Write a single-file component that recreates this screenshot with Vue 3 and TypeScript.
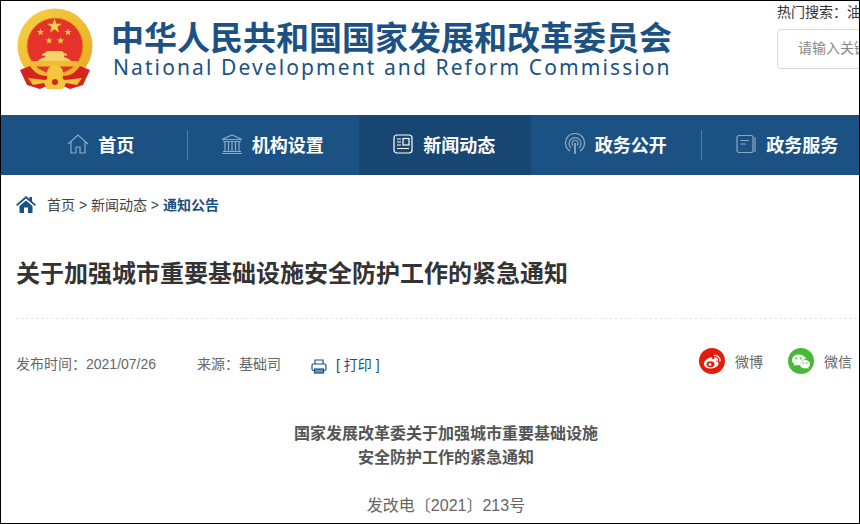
<script setup lang="ts">
interface NavItem { label: string; icon: string; active?: boolean }
const nav: NavItem[] = [
  { label: '首页', icon: 'home' },
  { label: '机构设置', icon: 'bank' },
  { label: '新闻动态', icon: 'news', active: true },
  { label: '政务公开', icon: 'signal' },
  { label: '政务服务', icon: 'book' },
]
</script>

<template>
  <div class="frame">
    <header class="top">
      <div class="brand">
        <svg class="emblem" viewBox="0 0 76 82" width="76" height="82">
          <defs>
            <linearGradient id="gold" x1="0" y1="0" x2="1" y2="1">
              <stop offset="0" stop-color="#f7d048" />
              <stop offset="1" stop-color="#e8a91e" />
            </linearGradient>
          </defs>
          <circle cx="38" cy="38" r="37.500" fill="url(#gold)" />
          <circle cx="38" cy="38" r="28" fill="#e5322a" stroke="#d9971c" stroke-width="1" />
          <polygon points="37.500,10.500 39.300,15.700 44.800,15.800 40.400,19.100 42,24.400 37.500,21.200 33,24.400 34.600,19.100 30.200,15.800 35.700,15.700" fill="#f8d24a" />
          <polygon points="23.500,20.500 24.400,23 27,23.100 24.900,24.700 25.600,27.200 23.500,25.800 21.400,27.200 22.100,24.700 20,23.100 22.600,23" fill="#f8d24a" />
          <polygon points="51,20.500 51.900,23 54.500,23.100 52.400,24.700 53.100,27.200 51,25.800 48.900,27.200 49.600,24.700 47.500,23.100 50.100,23" fill="#f8d24a" />
          <polygon points="32,29 32.900,31.500 35.500,31.600 33.400,33.200 34.100,35.700 32,34.300 29.900,35.700 30.600,33.200 28.500,31.600 31.100,31.500" fill="#f8d24a" />
          <polygon points="43.500,29 44.400,31.500 47,31.600 44.900,33.200 45.600,35.700 43.500,34.300 41.400,35.700 42.100,33.200 40,31.600 42.600,31.500" fill="#f8d24a" />
          <path d="M30 43 L45 43 L47 45 L50 46 L50 47.500 L47 47.500 L47 49 L52 51 L54 53 L21 53 L23 51 L28 49 L28 47.500 L25 47.500 L25 46 L28 45 Z" fill="#f6d26a" />
          <path d="M15 53 L60 53 L62 58.500 L13 58.500 Z" fill="#f0bd32" />
          <path d="M13 58 L3 62 L10 77 L23 81 L30 78 L30 68 C22 68 17 64 13 58 Z" fill="#d5231d" />
          <path d="M63 58 L73 62 L66 77 L53 81 L46 78 L46 68 C54 68 59 64 63 58 Z" fill="#d5231d" />
          <circle cx="38" cy="65" r="8" fill="#f4c63c" />
          <path d="M11 70 L28 72 L33 70 L43 70 L48 72 L65 70 L60 77 L49 75 L46 81 L30 81 L27 75 L16 77 Z" fill="#f4c63c" />
          <circle cx="38" cy="74" r="3" fill="#d5231d" />
        </svg>
        <div class="names">
          <div class="cn">中华人民共和国国家发展和改革委员会</div>
          <div class="en">National Development and Reform Commission</div>
        </div>
      </div>
      <div class="search">
        <div class="hot">热门搜索：油价</div>
        <div class="box">请输入关键字</div>
      </div>
    </header>

    <nav class="nav">
      <a v-for="item in nav" :key="item.label" class="nav-item" :class="{ active: item.active }">
        <svg class="nav-icon" viewBox="0 0 22 22" width="22" height="22" fill="none" stroke="currentColor" stroke-width="1.2">
          <template v-if="item.icon === 'home'">
            <path d="M1 11 L11 2 L21 11" />
            <path d="M4 9 V20 H9 V14 H13 V20 H18 V9" />
          </template>
          <template v-else-if="item.icon === 'bank'">
            <path d="M1 6.500 L11 2 L21 6.500 Z" />
            <path d="M2 8.500 H20 M1 20.500 H21 M2 18.500 H20 M4 9 V18 M7.500 9 V18 M11 9 V18 M14.500 9 V18 M18 9 V18" />
          </template>
          <template v-else-if="item.icon === 'news'">
            <rect x="2" y="2" width="18" height="18" rx="3" />
            <path d="M5 6 H9 M5 9 H9 M5 12 H9 M5 15.500 H17" />
            <rect x="11" y="5.500" width="6" height="6.500" />
          </template>
          <template v-else-if="item.icon === 'signal'">
            <path d="M6 18 A9.500 9.500 0 1 1 16 18" />
            <path d="M7 15 A6 6 0 1 1 15 15" />
            <path d="M9 12.500 A3 3 0 1 1 13 12.500" />
            <path d="M11 10 V21" stroke-width="1.800" />
          </template>
          <template v-else>
            <rect x="2" y="2.500" width="16" height="17" rx="2" />
            <path d="M5.500 7.500 H14 M5.500 11 H11 M20 4 V19" />
          </template>
        </svg>
        <span class="nav-label">{{ item.label }}</span>
      </a>
    </nav>

    <main class="page">
      <div class="crumbs">
        <svg class="crumb-icon" viewBox="0 0 20 17" width="20" height="17">
          <path d="M10 0 L13.500 3 V1 H16 V5.200 L20 8.700 L18.800 10 L10 2.600 L1.200 10 L0 8.700 Z M3.500 10 L10 4.500 L16.500 10 V17 H12 V11.500 H8 V17 H3.500 Z" fill="#1b5283" />
        </svg>
        <span class="trail">首页 &gt; 新闻动态 &gt; <b>通知公告</b></span>
      </div>

      <h1 class="title">关于加强城市重要基础设施安全防护工作的紧急通知</h1>

      <div class="meta">
        <span class="date">发布时间：2021/07/26</span>
        <span class="source">来源：基础司</span>
        <svg class="printer" viewBox="0 0 16 15" width="16" height="15" fill="none" stroke="#1b5283" stroke-width="1.200">
          <path d="M4 5 V1 H12 V5" />
          <path d="M3.500 11.500 H2.500 A1.500 1.500 0 0 1 1 10 V6.500 A1.500 1.500 0 0 1 2.500 5 H13.500 A1.500 1.500 0 0 1 15 6.500 V10 A1.500 1.500 0 0 1 13.500 11.500 H12.500" />
          <rect x="3.500" y="10" width="9" height="4" fill="#6f93b3" />
        </svg>
        <a class="print">[ 打印 ]</a>
        <div class="share">
          <span class="disc weibo">
            <svg viewBox="0 0 26 26" width="26" height="26">
              <path d="M11 9.500 C7 11 4.500 14 5 16.500 C5.600 19.500 9.500 21 13.500 20.300 C17.500 19.600 20 17 19.500 15 C19.200 13.800 18 13.300 17.300 13.200 C18 11.600 17.300 10.700 15.800 10.800 C14.800 10.900 13.800 11.300 13.300 11.500 C13.500 9.500 12.500 8.900 11 9.500 Z" fill="#fff" />
              <ellipse cx="11.500" cy="16.300" rx="4" ry="3" fill="#df1f0b" />
              <circle cx="11" cy="16.500" r="1.400" fill="#fff" />
              <path d="M15.500 7.500 A5 5 0 0 1 21 13 M15.800 10 A2.600 2.600 0 0 1 18.400 12.600" fill="none" stroke="#fff" stroke-width="1.300" stroke-linecap="round" />
            </svg>
          </span>
          <span class="share-label">微博</span>
          <span class="disc wechat">
            <svg viewBox="0 0 26 26" width="26" height="26">
              <path d="M10.500 6.500 C6.500 6.500 4 9 4 12 C4 13.800 5 15.200 6.300 16.100 L5.800 18 L8 16.900 C8.800 17.100 9.500 17.200 10.300 17.200 C11 17.200 11.500 17.100 12 17 C12 13.500 14.500 11.200 18 11 C17.200 8.300 14.200 6.500 10.500 6.500 Z" fill="#fff" />
              <path d="M17 12 C14 12 12 14 12 16.200 C12 18.600 14.200 20.400 17 20.400 C17.700 20.400 18.300 20.300 18.800 20.100 L20.700 21 L20.200 19.400 C21.300 18.600 22 17.500 22 16.200 C22 14 20 12 17 12 Z" fill="#fff" />
              <circle cx="8.300" cy="10.500" r="1" fill="#46b935" /><circle cx="12.700" cy="10.500" r="1" fill="#46b935" />
              <circle cx="15.300" cy="15" r=".8" fill="#46b935" /><circle cx="18.700" cy="15" r=".8" fill="#46b935" />
            </svg>
          </span>
          <span class="share-label">微信</span>
        </div>
      </div>

      <article class="body">
        <p class="headline">国家发展改革委关于加强城市重要基础设施<br />安全防护工作的紧急通知</p>
        <p class="docno">发改电〔2021〕213号</p>
      </article>
    </main>
  </div>
</template>

<style>
html, body { margin: 0; overflow: hidden; background: #fff; }
</style>

<style scoped>
.frame {
  width: 860px;
  height: 524px;
  box-sizing: border-box;
  border: 1px solid #000;
  overflow: hidden;
  background: #fff;
  font-family: "Liberation Sans", "Noto Sans CJK SC", sans-serif;
  color: #666;
}
.top {
  height: 114px;
  display: flex;
  justify-content: space-between;
}
.brand { display: flex; align-items: flex-start; }
.emblem { margin: 7px 0 0 16px; flex: none; }
.names { margin: 21px 0 0 18px; color: #1b5283; white-space: nowrap; }
.cn {
  font-size: 33px;
  line-height: 34px;
  font-weight: 700;
}
.en {
  font-family: "Noto Sans", sans-serif;
  font-size: 21px;
  line-height: 22px;
  letter-spacing: 2.100px;
  margin-left: 2px;
}
.search { width: 82px; flex: none; overflow: hidden; white-space: nowrap; }
.hot { font-size: 14px; line-height: 22px; color: #333; }
.box {
  width: 140px;
  height: 40px;
  margin-top: 6px;
  box-sizing: border-box;
  border: 1px solid #ddd;
  border-radius: 4px;
  padding-left: 20px;
  font-size: 14px;
  line-height: 37px;
  color: #888;
}
.nav {
  height: 60px;
  background: #1b5283;
  display: flex;
  padding-left: 15px;
  overflow: hidden;
}
.nav-item {
  position: relative;
  flex: none;
  width: 171.500px;
  box-sizing: border-box;
  padding: 0 2px 2px 0;
  display: flex;
  align-items: center;
  justify-content: center;
  gap: 9px;
  color: rgba(255, 255, 255, 0.5);
}
.nav-item:not(:first-child)::before {
  content: "";
  position: absolute;
  left: -1px;
  top: 15px;
  height: 30px;
  width: 1px;
  background: rgba(255, 255, 255, 0.25);
}
.nav-item.active { background: #174672; color: #fff; }
.nav-item.active::before, .nav-item.active + .nav-item::before { display: none; }
.nav-icon { flex: none; }
.nav-label { color: #fff; font-size: 18px; font-weight: 700; }
.page { width: 861px; box-sizing: border-box; padding-left: 15px; }
.crumbs {
  height: 17px;
  margin-top: 21px;
  display: flex;
  align-items: center;
  gap: 11px;
  font-size: 14px;
  color: #444;
  white-space: nowrap;
}
.crumb-icon { flex: none; }
.trail { margin-bottom: 2px; }
.crumbs b { color: #1b4f7e; font-weight: 700; }
.title {
  margin: 43px 0 0;
  font-size: 24px;
  line-height: 36px;
  font-weight: 700;
  color: #333;
  padding-bottom: 26px;
  border-bottom: 1px dashed #e6e6e6;
  white-space: nowrap;
}
.meta {
  height: 32px;
  margin-top: 28px;
  display: flex;
  align-items: center;
  font-size: 14px;
  white-space: nowrap;
  position: relative;
}
.date { width: 181px; }
.source { width: 114px; }
.printer { flex: none; margin-top: 6px; }
.print { color: #1b5283; margin: 2px 0 0 9px; }
.share {
  margin-left: auto;
  display: flex;
  align-items: center;
  margin-top: -4px;
  padding-right: 10px;
}
.disc {
  width: 26px;
  height: 26px;
  border-radius: 50%;
  display: block;
}
.disc svg { display: block; }
.weibo { background: #df1f0b; }
.wechat { background: #46b935; margin-left: 25px; }
.share-label { margin-left: 10px; }
.body { text-align: center; margin: 43px 0 0 14px; }
.headline {
  margin: 0;
  font-size: 16px;
  line-height: 24px;
  font-weight: 700;
  color: #555;
}
.docno { margin: 24px 0 0; font-size: 16px; line-height: 24px; color: #666; }
</style>
